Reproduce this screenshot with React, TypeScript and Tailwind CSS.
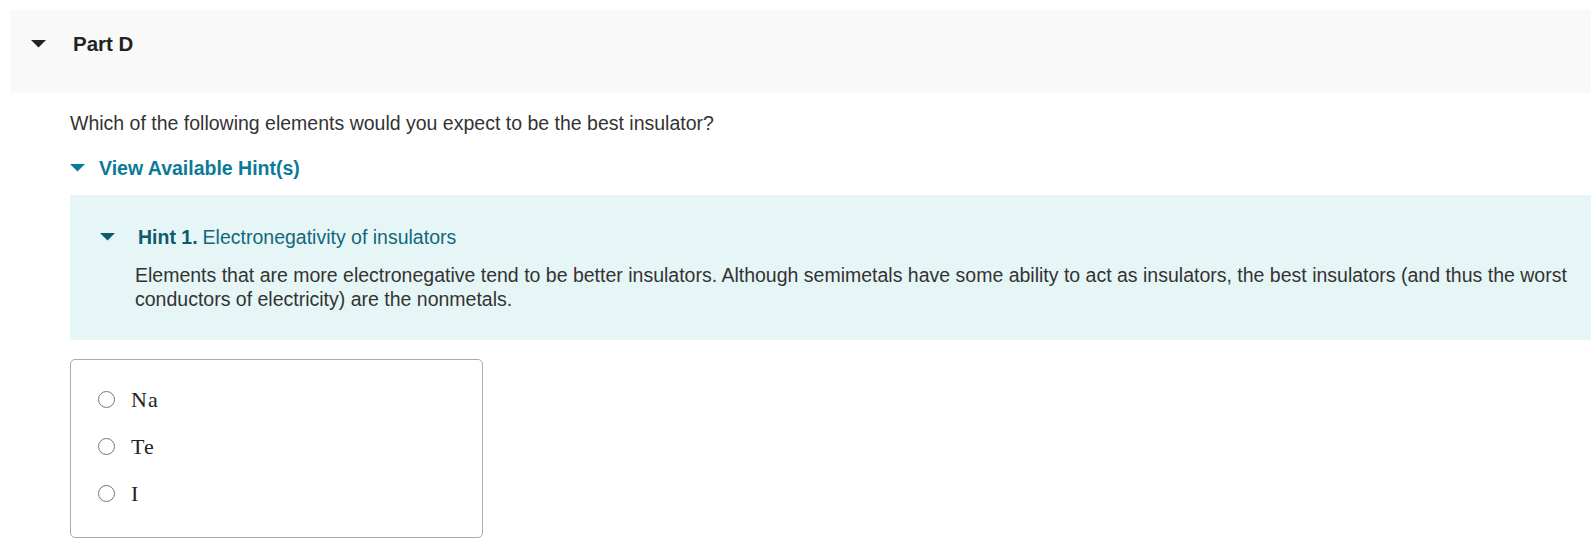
import React from 'react';

const sans = { fontFamily: '"Liberation Sans", Arial, sans-serif' };

function Caret({ className }: { className: string }) {
  return (
    <svg viewBox="0 0 15 8" className={className} fill="currentColor" aria-hidden>
      <path d="M0 0 L15 0 L7.5 7.5 Z" />
    </svg>
  );
}

function Choice({ label }: { label: string }) {
  return (
    <label className="flex items-center h-[47px]">
      <span className="w-[17px] h-[17px] rounded-full border-[1.5px] border-[#777] bg-white shrink-0" />
      <span
        className="ml-[16px] text-[22px] tracking-[0.05em] text-[#222] leading-none"
        style={{ fontFamily: '"Liberation Serif", "Times New Roman", serif' }}
      >
        {label}
      </span>
    </label>
  );
}

export default function App() {
  return (
    <div className="w-[1591px] h-[544px] bg-white overflow-hidden pt-[10px] pl-[10px]" style={sans}>
      <div className="h-[83px] bg-[#f9f9f9] flex items-start pt-[22px]">
        <div className="h-[24px] flex items-center">
          <Caret className="w-[15px] h-[8px] ml-[21px] text-[#222]" />
        </div>
        <h2 className="ml-[27px] text-[20.5px] leading-[24px] font-bold text-[#222]">Part D</h2>
      </div>

      <div className="pl-[60px]">
        <p className="mt-[18px] text-[19.5px] text-[#333] leading-[24px]">
          Which of the following elements would you expect to be the best insulator?
        </p>

        <button className="mt-[21px] flex items-center text-[#0b7a97] font-bold text-[19.5px] leading-[24px]">
          <Caret className="w-[15px] h-[8px]" />
          <span className="ml-[14px]">View Available Hint(s)</span>
        </button>

        <div className="mt-[15px] bg-[#e6f6f6] pt-[30px] pb-[29px] pl-[30px] pr-[6px]">
          <div className="flex items-center text-[19.5px] leading-[24px] text-[#12687b]">
            <Caret className="w-[15px] h-[8px] text-[#0f5a6b]" />
            <span className="ml-[23px] font-bold text-[#0f5a6b]">Hint 1.</span>
            <span className="ml-[5px]">Electronegativity of insulators</span>
          </div>
          <p className="mt-[14px] ml-[35px] text-[19.5px] leading-[24px] text-[#333]">
            Elements that are more electronegative tend to be better insulators. Although semimetals have some ability to act as insulators, the best insulators (and thus the worst conductors of electricity) are the nonmetals.
          </p>
        </div>

        <div className="mt-[19px] w-[413px] h-[179px] border border-[#aaa] rounded-[5px] pl-[27px] pt-[16px]">
          <Choice label="Na" />
          <Choice label="Te" />
          <Choice label="I" />
        </div>
      </div>
    </div>
  );
}
